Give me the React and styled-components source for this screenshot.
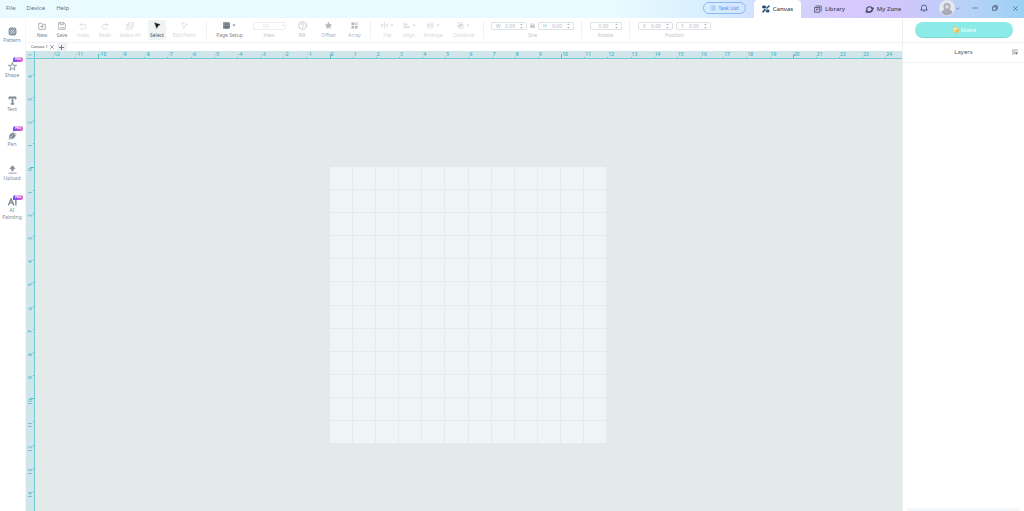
import React from "react";
import styled, { createGlobalStyle, css } from "styled-components";

const Global = createGlobalStyle`
  * { box-sizing: border-box; }
  html, body { margin: 0; }
  body { font-family: "Noto Sans", "Open Sans", sans-serif; font-size: 6px; line-height: 8px; color: #6f7782; background: #fff; }
  button, input, select { font: inherit; color: inherit; background: none; border: 0; padding: 0; margin: 0; }
  button { cursor: pointer; }
  svg { display: block; flex: none; }
`;

const Page = styled.div`
  height: 100vh;
  display: flex;
  flex-direction: column;
  overflow: hidden;
`;

const TitleBar = styled.header`
  flex: none;
  height: 18px;
  display: flex;
  align-items: stretch;
  background: linear-gradient(90deg, #eafbff 0%, #eafbff 60%, #d5edff 70%, #cfd9ff 76%, #d8c9fd 82%, #cfc6fb 88%, #b5d2f7 95%, #9cd0f5 100%);
`;

const MenuBar = styled.nav`
  display: flex;
  gap: 11px;
  padding: 0 0 2px 6px;
  flex: 1;
  align-items: center;
`;

const MenuButton = styled.button`
  color: #68727d;
`;

const TaskButton = styled.button`
  align-self: center;
  width: 43px;
  height: 12px;
  margin: 0 8px 2px 0;
  border: 1px solid #8fb6fa;
  border-radius: 6px;
  color: #5b93f7;
  font-size: 5px;
  font-weight: 500;
  display: flex;
  align-items: center;
  justify-content: center;
  gap: 2px;
`;

const Tab = styled.button`
  width: ${(p) => p.$width}px;
  display: flex;
  align-items: center;
  justify-content: center;
  gap: 3px;
  font-weight: 500;
  color: #40475a;
  border-radius: 4px 4px 0 0;
  ${(p) => p.$active && css`background: #fff;`}
`;

const WindowTools = styled.div`
  display: flex;
  align-items: center;
  padding: 0 5px 2px 12px;
  color: #3d4a66;
`;

const IconButton = styled.button`
  display: flex;
  align-items: center;
  justify-content: center;
  width: ${(p) => p.$width || 8}px;
  margin-left: ${(p) => p.$gap || 0}px;
`;

const Body = styled.div`
  flex: 1;
  min-height: 0;
  display: grid;
  grid-template-columns: 26px minmax(0, 1fr) 122px;
  grid-template-rows: 25px minmax(0, 1fr);
`;

const SideBar = styled.nav`
  grid-row: 1 / 3;
  border-right: 1px solid #f4f6f7;
  display: flex;
  flex-direction: column;
  padding-top: 5px;
`;

const SideItem = styled.button`
  position: relative;
  width: 24px;
  height: 34px;
  display: flex;
  flex-direction: column;
  align-items: center;
  padding-top: ${(p) => (p.$twoLines ? 1 : 4)}px;
  gap: 1px;
  color: #818b95;
  font-size: 5px;

  &:nth-child(odd) {
    margin-bottom: 1px;
  }
`;

const SideLabel = styled.span`
  line-height: 7px;
`;

const Badge = styled.span`
  position: absolute;
  top: -1px;
  right: 1px;
  width: 10px;
  height: 5px;
  border-radius: 3px 3px 3px 0;
  background: linear-gradient(90deg, #6a4df5, #f05ad0);
  color: #fff;
  font-size: 3px;
  line-height: 5px;
  font-weight: 700;
`;

const ToolBar = styled.div`
  border-bottom: 1px solid #f1f3f4;
  display: flex;
  padding: 2px 0 0 6px;
  overflow: hidden;
`;

const toneColors = { off: "#d3d7da", dim: "#b0b6bb", on: "#7c848c", active: "#4b5258" };

const Tool = styled.button`
  flex: none;
  width: ${(p) => p.$width}px;
  height: 20px;
  display: flex;
  flex-direction: column;
  align-items: center;
  justify-content: space-between;
  padding-bottom: 1px;
  border-radius: 2px;
  font-size: 5px;
  white-space: nowrap;
  color: ${(p) => toneColors[p.$tone]};
  ${(p) => p.$tone === "active" && css`
    background: #f0f4f5;
    margin-left: 4px;
  `}
`;

const ToolIcon = styled.span`
  display: flex;
  align-items: center;
  gap: 2px;
  height: 12px;
`;

const Group = styled.div`
  flex: none;
  width: ${(p) => p.$width}px;
  height: 20px;
  display: flex;
  flex-direction: column;
  align-items: center;
  justify-content: space-between;
  padding-bottom: 1px;
  font-size: 5px;
  color: #c0c6ca;
`;

const Fields = styled.div`
  display: flex;
  align-items: center;
  gap: 3px;
  height: 11px;
`;

const Divider = styled.span`
  flex: none;
  width: 1px;
  height: 18px;
  margin: 1px 4px 0;
  background: #eff1f2;
`;

const Field = styled.label`
  width: ${(p) => p.$width}px;
  height: 8px;
  border: 1px solid #dfe2e4;
  border-radius: 2px;
  display: flex;
  align-items: center;
  gap: 2px;
  padding: 0 3px 0 4px;
  color: #b4bac0;
  line-height: 6px;
`;

const NumberInput = styled.input`
  flex: 1;
  min-width: 0;
  height: 6px;
  text-align: center;
`;

const FillSelect = styled.select`
  width: 33px;
  height: 8px;
  border: 1px solid #eceeef;
  border-radius: 2px;
  color: #dfe3e5;
  padding: 0 9px;
  line-height: 6px;
  appearance: none;
  background: linear-gradient(#d5d9dc, #d5d9dc) 28px 2px / 2px 1px no-repeat;
`;

const Workspace = styled.main`
  display: grid;
  grid-template-columns: 9px minmax(0, 1fr);
  grid-template-rows: 8px 8px minmax(0, 1fr);
  background: #e4e9ea;
`;

const FileTabs = styled.div`
  grid-column: 1 / 3;
  background: #fff;
  display: flex;
`;

const FileTab = styled.div`
  display: flex;
  align-items: center;
  padding: 0 2px 0 5px;
  gap: 2px;
  font-size: 4px;
  color: #3f474e;
`;

const AddTab = styled.button`
  width: 10px;
  display: flex;
  align-items: center;
  justify-content: center;
  background: #eef2f4;
  color: #5c656d;
`;

const Corner = styled.div`
  background: #d1e6ea;
  border-right: 1px solid #72cbd3;
  border-bottom: 1px solid #72cbd3;
  color: #4fbcc7;
  font-size: 4px;
  line-height: 7px;
  text-align: center;
`;

const RulerX = styled.div`
  background: #d1e6ea;
  border-bottom: 1px solid #72cbd3;
  display: flex;
  justify-content: center;
  overflow: hidden;
`;

const ScaleX = styled.div`
  flex: none;
  width: 880px;
  display: grid;
  grid-template-columns: repeat(38, 1fr);
`;

const MarkX = styled.span`
  position: relative;
  padding-left: 1px;
  color: #3fb2bf;
  font-size: 5px;
  line-height: 6px;
  font-weight: 500;
  &::after {
    content: "";
    position: absolute;
    left: 0;
    bottom: 0;
    width: 1px;
    height: ${(p) => (p.$major ? 4 : 1)}px;
    background: #56bfca;
  }
`;

const RulerY = styled.div`
  background: #d1e6ea;
  border-right: 1px solid #72cbd3;
  overflow: hidden;
  padding-top: 15px;
`;

const ScaleY = styled.div`
  height: 440px;
  display: grid;
  grid-template-rows: repeat(19, 1fr);
`;

const MarkY = styled.span`
  position: relative;
  padding: 1px 0 0 1px;
  &::after {
    content: "";
    position: absolute;
    right: 0;
    top: 0;
    height: 1px;
    width: ${(p) => (p.$major ? 4 : 1)}px;
    background: #56bfca;
  }
`;

const TurnedLabel = styled.span`
  display: block;
  writing-mode: vertical-rl;
  transform: rotate(180deg);
  width: 6px;
  color: #3fb2bf;
  font-size: 5px;
  line-height: 6px;
  font-weight: 500;
`;

const Stage = styled.div`
  overflow: hidden;
  padding-top: 108px;
`;

const Board = styled.div`
  width: 277px;
  aspect-ratio: 1;
  margin: 0 auto;
  display: grid;
  grid-template-columns: repeat(12, 1fr);
  grid-template-rows: repeat(12, 1fr);
  background: #eff4f5;
`;

const Cell = styled.span`
  border-right: 1px solid #e5eaec;
  border-bottom: 1px solid #e5eaec;
`;

const MakeArea = styled.div`
  border-left: 1px solid #eef1f2;
  border-bottom: 1px solid #f1f3f4;
  padding: 4px 11px 0 12px;
`;

const MakeButton = styled.button`
  width: 100%;
  height: 16px;
  border-radius: 8px;
  background: #8cebe6;
  border-bottom: 1px solid #7ad8d6;
  color: #f0fffe;
  display: flex;
  align-items: center;
  justify-content: center;
  gap: 1px;
`;

const LayersPanel = styled.aside`
  border-left: 1px solid #eef1f2;
  display: flex;
  flex-direction: column;
  justify-content: space-between;
`;

const LayersHead = styled.div`
  height: 20px;
  border-bottom: 1px solid #f1f4f5;
  display: grid;
  grid-template-columns: 1fr auto 1fr;
  align-items: center;
  padding: 0 6px 2px;
  color: #535b63;
`;

const LayersMenu = styled.button`
  justify-self: end;
`;

const LayersFoot = styled.div`
  height: 3px;
  margin: 0 4px;
  border-radius: 2px 2px 0 0;
  background: #f3f7fa;
`;

const Icon = ({ size = 8, children, fill = "none", stroke = "currentColor", w = 1.5 }) => (
  <svg width={size} height={size} viewBox="0 0 16 16" fill={fill} stroke={stroke} strokeWidth={w} strokeLinecap="round" strokeLinejoin="round" aria-hidden="true">
    {children}
  </svg>
);

const Caret = () => (
  <svg width="4" height="3" viewBox="0 0 8 6" fill="currentColor" aria-hidden="true"><path d="M1 1h6L4 5z" /></svg>
);

const Stepper = () => (
  <svg width="3" height="6" viewBox="0 0 6 12" fill="currentColor" aria-hidden="true"><path d="M0 4l3-3 3 3zM0 8l3 3 3-3z" /></svg>
);

const star = "M8 .8l2.200 4.600 5 .7-3.600 3.500.9 5L8 12.200l-4.500 2.400.9-5L.8 6.100l5-.7z";
const sharpStar = "M8 .8l1.700 5 5.500.1-4.400 3.200 1.600 5.400L8 11.300l-4.400 3.200 1.600-5.400L.8 5.900l5.500-.1z";
const cursor = "M2 2l12 4-5 2.500L6.500 14z";

const icons = {
  new: <Icon w={1.200}><path d="M1.500 14V2.500h5l1.500 2h6.500V14zM8 6.500v5M5.500 9h5" /></Icon>,
  save: <Icon w={1.200}><path d="M1.500 1.500h10l3 3v10h-13zM4.500 1.500v4h6v-4M5 11.500h6" /></Icon>,
  undo: <Icon><path d="M5.500 1.500L2 5l3.500 3.500M2 5h7.500a4.500 4.500 0 010 9H3" /></Icon>,
  redo: <Icon><path d="M10.500 1.500L14 5l-3.500 3.500M14 5H6.500a4.500 4.500 0 000 9H13" /></Icon>,
  selectAll: <Icon><path d="M5 1.500h9.500V10H5zM5 5H1.500v9.500h10V10M7 5.500l2 2 3.500-3.500" /></Icon>,
  select: <Icon size={7} fill="#16181a" stroke="#16181a" w={1}><path d={cursor} /></Icon>,
  edit: <Icon size={7}><path d={cursor} /></Icon>,
  page: <Icon size={7} fill="#8c9399" stroke="#5c646b" w={1.500}><path d="M1.500 1.500h13v13h-13zM1.500 10.500h13M4.500 5h7M6 11v3M10 11v3" /></Icon>,
  help: <Icon size={9} w={1.200}><circle cx="8" cy="8" r="6.800" /><path d="M5.800 6.300c0-3 4.600-2.800 4.400-.2C10.100 7.600 8 7.600 8 9.500M8 11.700v.2" /></Icon>,
  star: <Icon size={7} fill="currentColor" w={1}><path d={star} /></Icon>,
  array: <Icon size={7} fill="currentColor" w={0}><path d="M1 1h6v6H1zM9 9h6v6H9zM1 9h6v6H1z" /><path d="M9.800 1.800h4.400v4.400H9.800z" fill="none" strokeWidth="1.500" /></Icon>,
  flip: <Icon size={7}><path d="M8 1v14M1 5v6l4-3zM15 5v6l-4-3z" /></Icon>,
  align: <Icon size={7} fill="currentColor" w={1}><path d="M1.500 1v14M4 4h5v3H4zM4 10h10v3H4z" /></Icon>,
  arrange: <Icon size={7}><path d="M2 3.500L5 1.500h6l3 2v9l-3 2H5l-3-2zM4 6h8v4H4z" /></Icon>,
  combine: <Icon size={7}><path d="M1.500 1.500h9v9h-9zM5.500 5.500h9v9h-9z" /><path d="M6 6h4v4H6z" fill="currentColor" /></Icon>,
  pattern: <Icon size={9} stroke="none" fill="#8c97a4"><rect x="1" y="1" width="14" height="14" rx="4" /><path d="M5 11l6-6M4 8l3-3M9 11.500l3-3" stroke="#fff" strokeWidth="1.300" /></Icon>,
  shape: <Icon size={9}><path d={sharpStar} /></Icon>,
  text: <Icon size={9} w={3}><path d="M2.500 4.500v-2h11v2M8 3v11" /><path d="M5.500 14h5" strokeWidth="2" /></Icon>,
  pen: <Icon size={9} fill="currentColor" w={1}><path d="M2 14l1.500-8L9 3l4.500 4.500L11 12zM10.500 1.500l4 4" /><path d="M2.500 13.500L8 8" stroke="#fff" /></Icon>,
  upload: <Icon size={9} w={1.500}><path d="M8 11V3" strokeWidth="3.500" strokeLinecap="butt" /><path d="M4 6L8 1.500 12 6z" fill="currentColor" /><path d="M1.500 14.500h13" /></Icon>,
  ai: <Icon size={9} w={2.500}><path d="M1 14L5.500 3 10 14M2.800 10.500h5.500M14 5v9" /></Icon>,
};

const editTools = [
  ["New", "new", 20, "on"], ["Save", "save", 20, "on"], ["Undo", "undo", 22, "off"], ["Redo", "redo", 22, "off"],
  ["Select All", "selectAll", 28, "off"], ["Select", "select", 18, "active"], ["Edit Point", "edit", 36, "off"],
];
const fillTools = [["Fill", "help", 24], ["Offset", "star", 29], ["Array", "array", 23]];
const layoutTools = [["Flip", "flip", 25], ["Align", "align", 18], ["Arrange", "arrange", 30], ["Combine", "combine", 31]];
const sideTools = [
  ["Pattern", "pattern"], ["Shape", "shape", true], ["Text", "text"], ["Pen", "pen", true], ["Upload", "upload"], ["AI Painting", "ai", true],
];

const ToolButton = ({ label, icon, width, tone, menu }) => (
  <Tool type="button" $width={width} $tone={tone}>
    <ToolIcon>{icons[icon]}{menu && <Caret />}</ToolIcon>
    {label}
  </Tool>
);

const NumberField = ({ prefix, name, width }) => (
  <Field $width={width}>
    {prefix}
    <NumberInput aria-label={name} defaultValue="0.00" />
    <Stepper />
  </Field>
);

export default function App() {
  return (
    <Page>
      <Global />
      <TitleBar>
        <MenuBar>
          {["File", "Device", "Help"].map((m) => <MenuButton key={m} type="button">{m}</MenuButton>)}
        </MenuBar>
        <TaskButton type="button">
          <Icon size={6}><path d="M2 3h1M6 3h8M2 8h1M6 8h8M2 13h1M6 13h8" /></Icon>
          Task List
        </TaskButton>
        <Tab type="button" $active $width={47}>
          <Icon size={8} stroke="#1f4b73" w={1.500}><path d="M2 2h5v4H2zM9 10h5v4H9z" fill="#1f4b73" /><path d="M10 6l4-4M2 14l4-5" strokeWidth="3" /></Icon>
          Canvas
        </Tab>
        <Tab type="button" $width={57}>
          <Icon size={8}><path d="M1.500 5h10v9.500h-10zM4 2h10.500v10M4 11l5-3M4 8h2" /></Icon>
          Library
        </Tab>
        <Tab type="button" $width={50}>
          <Icon size={9} w={1.800}><circle cx="8" cy="8" r="5" /><path d="M3.500 9.500C-2 14 6 14 11 10.500s5-6 1-5" /></Icon>
          My Zone
        </Tab>
        <WindowTools>
          <IconButton type="button" aria-label="Notifications">
            <Icon><path d="M3 12V7a5 5 0 0110 0v5M1.500 12h13M7 14.500h2" /></Icon>
          </IconButton>
          <IconButton type="button" aria-label="Account" $width={21} $gap={11}>
            <Icon size={16} stroke="none"><circle cx="8" cy="8" r="8" fill="#e6e7ee" /><circle cx="8" cy="6.500" r="3.500" fill="#a9abb5" /><path d="M2.500 13a5.500 4 0 0111 0 7.500 7.500 0 01-11 0" fill="#a9abb5" /><circle cx="8" cy="6.700" r="2" fill="#d6d8df" /></Icon>
            <Icon size={5}><path d="M4 6l4 4 4-4" /></Icon>
          </IconButton>
          <IconButton type="button" aria-label="Minimize" $gap={11}><Icon size={6}><path d="M2 8h12" /></Icon></IconButton>
          <IconButton type="button" aria-label="Restore" $gap={12}><Icon size={6} w={2}><path d="M2 5h9v9H2zM5 2h9v9" /></Icon></IconButton>
          <IconButton type="button" aria-label="Close" $gap={12}><Icon size={5} w={2}><path d="M2 2l12 12M14 2L2 14" /></Icon></IconButton>
        </WindowTools>
      </TitleBar>
      <Body>
        <SideBar>
          {sideTools.map(([label, icon, pro]) => (
            <SideItem key={label} type="button" $twoLines={label.includes(" ")}>
              {icons[icon]}
              {pro && <Badge>PRO</Badge>}
              <SideLabel>{label}</SideLabel>
            </SideItem>
          ))}
        </SideBar>
        <ToolBar>
          {editTools.map(([l, i, w, t]) => <ToolButton key={l} label={l} icon={i} width={w} tone={t} />)}
          <Divider />
          <ToolButton label="Page Setup" icon="page" width={37} tone="on" menu />
          <Group $width={42}>
            <Fields><FillSelect aria-label="View"><option>Fill</option></FillSelect></Fields>
            View
          </Group>
          {fillTools.map(([l, i, w]) => <ToolButton key={l} label={l} icon={i} width={w} tone="dim" />)}
          <Divider />
          {layoutTools.map(([l, i, w]) => <ToolButton key={l} label={l} icon={i} width={w} tone="off" menu />)}
          <Divider />
          <Group $width={89}>
            <Fields>
              <NumberField prefix="W" name="Width" width={36} />
              <Icon size={5} w={2}><path d="M4 7V4a4 4 0 018 0v3" /><path d="M2 7h12v8H2z" fill="currentColor" /></Icon>
              <NumberField prefix="H" name="Height" width={36} />
            </Fields>
            Size
          </Group>
          <Divider />
          <Group $width={39}>
            <Fields><NumberField name="Rotation" width={32} /></Fields>
            Rotate
          </Group>
          <Divider />
          <Group $width={81}>
            <Fields>
              <NumberField prefix="X" name="X position" width={35} />
              <NumberField prefix="Y" name="Y position" width={35} />
            </Fields>
            Position
          </Group>
        </ToolBar>
        <MakeArea>
          <MakeButton type="button">
            <Icon size={8} stroke="#f5c04a" fill="#fff2bd"><circle cx="7" cy="7" r="5" /><path d="M7 7l7 3-3 1-1 4z" fill="#f7a838" /></Icon>
            Make
          </MakeButton>
        </MakeArea>
        <Workspace>
          <FileTabs>
            <FileTab>Canvas 1 <IconButton type="button" aria-label="Close Canvas 1" $width={5}><Icon size={4} w={2}><path d="M2 2l12 12M14 2L2 14" /></Icon></IconButton></FileTab>
            <AddTab type="button" aria-label="Add canvas"><Icon size={5} w={2.500}><path d="M8 1v14M1 8h14" /></Icon></AddTab>
          </FileTabs>
          <Corner>in</Corner>
          <RulerX>
            <ScaleX>
              {Array.from({ length: 38 }, (_, i) => i - 13).map((n) => <MarkX key={n} $major={n % 10 === 0}>{n > -13 && n}</MarkX>)}
            </ScaleX>
          </RulerX>
          <RulerY>
            <ScaleY>
              {Array.from({ length: 19 }, (_, i) => i - 4).map((n) => <MarkY key={n} $major={n % 10 === 0}><TurnedLabel>{Math.abs(n)}</TurnedLabel></MarkY>)}
            </ScaleY>
          </RulerY>
          <Stage>
            <Board>{Array.from({ length: 144 }, (_, i) => <Cell key={i} />)}</Board>
          </Stage>
        </Workspace>
        <LayersPanel>
          <LayersHead>
            <span />
            Layers
            <LayersMenu type="button" aria-label="Layer options"><Icon size={6} w={1.500}><path d="M1 3h14M1 8h6M1 13h6" /><path d="M9 9h6l-3 5z" fill="currentColor" strokeWidth="1" /></Icon></LayersMenu>
          </LayersHead>
          <LayersFoot />
        </LayersPanel>
      </Body>
    </Page>
  );
}
